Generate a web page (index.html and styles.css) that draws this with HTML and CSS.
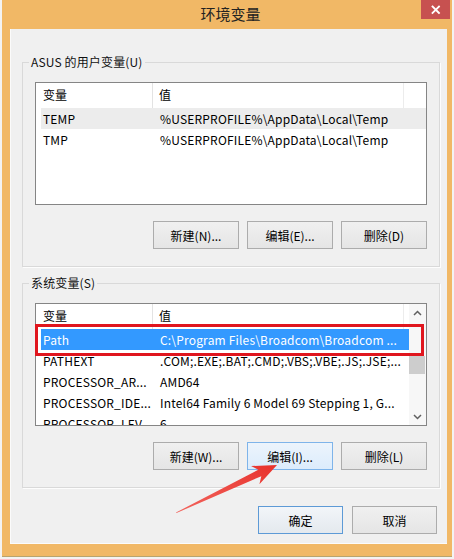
FILE: index.html
```html
<!DOCTYPE html>
<html lang="zh-CN">
<head>
<meta charset="utf-8">
<title>环境变量</title>
<link rel="stylesheet" href="styles.css">
</head>
<body>
<div class="window">
  <div class="titlebar">
    <span class="spacer"></span>
    <div class="title">环境变量</div>
    <div class="close">
      <svg width="29" height="19" viewBox="0 0 29 19"><path d="M11.5 6.5 L18 13 M18 6.5 L11.5 13" stroke="#fff" stroke-width="1.8" stroke-linecap="square"/></svg>
    </div>
  </div>
  <div class="content">
    <fieldset class="group">
      <legend>ASUS 的用户变量(U)</legend>
      <div class="list">
        <div class="rows">
          <div class="lhead"><div class="h1">变量</div><div class="h2">值</div></div>
          <div class="row hover"><div class="c1">TEMP</div><div class="c2">%USERPROFILE%\AppData\Local\Temp</div></div>
          <div class="row"><div class="c1">TMP</div><div class="c2">%USERPROFILE%\AppData\Local\Temp</div></div>
        </div>
      </div>
      <div class="btns">
        <button class="btn">新建(N)...</button>
        <button class="btn">编辑(E)...</button>
        <button class="btn">删除(D)</button>
      </div>
    </fieldset>
    <fieldset class="group group2">
      <legend>系统变量(S)</legend>
      <div class="list">
        <div class="rows">
          <div class="lhead"><div class="h1">变量</div><div class="h2">值</div></div>
          <div class="row selected"><div class="c1">Path</div><div class="c2">C:\Program Files\Broadcom\Broadcom ...</div></div>
          <div class="row"><div class="c1">PATHEXT</div><div class="c2">.COM;.EXE;.BAT;.CMD;.VBS;.VBE;.JS;.JSE;...</div></div>
          <div class="row"><div class="c1">PROCESSOR_AR...</div><div class="c2">AMD64</div></div>
          <div class="row"><div class="c1">PROCESSOR_IDE...</div><div class="c2">Intel64 Family 6 Model 69 Stepping 1, G...</div></div>
          <div class="row"><div class="c1">PROCESSOR_LEV...</div><div class="c2">6</div></div>
        </div>
        <div class="sbar">
          <div class="sarrow"><svg width="9" height="6" viewBox="0 0 9 6"><path d="M1 5 L4.5 1.5 L8 5" fill="none" stroke="#606060" stroke-width="1.5"/></svg></div>
          <div class="track"><div class="thumb"></div></div>
          <div class="sarrow"><svg width="9" height="6" viewBox="0 0 9 6"><path d="M1 1 L4.5 4.5 L8 1" fill="none" stroke="#606060" stroke-width="1.5"/></svg></div>
        </div>
        <div class="mark"></div>
      </div>
      <div class="btns">
        <button class="btn">新建(W)...</button>
        <button class="btn hot">编辑(I)...</button>
        <button class="btn">删除(L)</button>
      </div>
    </fieldset>
    <div class="dlgbtns">
      <button class="btn default">确定</button>
      <button class="btn">取消</button>
    </div>
  </div>
  <svg class="arrow" width="450" height="556" viewBox="2 0 450 556">
    <defs>
      <linearGradient id="ag" x1="0" y1="1" x2="1" y2="0">
        <stop offset="0" stop-color="#f2655e"/>
        <stop offset="1" stop-color="#e8322c"/>
      </linearGradient>
    </defs>
    <polygon points="176,512.5 258.3,469.8 251,466 277,465 259.4,484.2 261.3,476.2 176.5,513" fill="url(#ag)"/>
  </svg>
</div>
</body>
</html>
```
FILE: styles.css
```css
* { box-sizing: border-box; }
html, body { margin: 0; padding: 0; }
body {
  background: #f3f3f3;
  font-family: "Noto Sans CJK SC", "Noto Sans", sans-serif;
  font-size: 12px;
  color: #000;
}
.window {
  position: relative;
  margin-left: 2px;
  width: 450px;
  height: 557px;
  background: #f1b866;
  padding: 0 5px 12px 8px;
  border-bottom: 1px solid #b8a46e;
  display: flex;
  flex-direction: column;
}
.titlebar {
  height: 29px;
  display: grid;
  grid-template-columns: 1fr auto 1fr;
  margin-right: -3px;
}
.title {
  font-size: 15px;
  line-height: 27px;
  color: #222;
  padding-left: 1px;
}
.close {
  justify-self: end;
  align-self: start;
  width: 29px;
  height: 19px;
  background: #c75150;
}
.close svg { display: block; }
.content {
  flex: 1;
  background: #f0f0f0;
  box-shadow: inset 1px 0 #fbfbfb, inset 0 -1px #fbfbfb;
  padding: 25px 7px 0 12px;
  display: flex;
  flex-direction: column;
}
.group {
  margin: 0;
  padding: 0 12px 17px;
  border: 1px solid #d9d9d9;
  box-shadow: 1px 1px 0 #fdfdfd;
  min-width: 0;
}
.group2 { margin-top: 8px; }
legend {
  margin-left: -6px;
  padding: 0 2px;
  line-height: 16px;
  color: #111;
  letter-spacing: 0.15px;
}
.list {
  position: relative;
  margin-top: 12px;
  height: 123px;
  border: 1px solid #858585;
  background: #fff;
  display: flex;
  overflow: visible;
}
.rows {
  flex: 1;
  overflow: hidden;
  min-width: 0;
}
.lhead {
  height: 25px;
  display: flex;
  line-height: 24px;
}
.h1 {
  width: 117px;
  padding-left: 7px;
  border-right: 1px solid #e3e3e3;
}
.h2 {
  width: 251px;
  padding-left: 6px;
  border-right: 1px solid #ececec;
}
.row {
  display: flex;
  height: 21px;
  line-height: 21px;
  margin-left: 5px;
  white-space: nowrap;
  letter-spacing: 0.18px;
}
.row.hover { background: #ececec; }
.row.selected { background: #3399ff; color: #fff; }
.c1 { width: 117px; padding-left: 2px; overflow: hidden; }
.c2 { flex: 1; padding-left: 2px; overflow: hidden; }
.sbar {
  width: 17px;
  display: flex;
  flex-direction: column;
  background: #f7f7f7;
}
.sarrow {
  height: 17px;
  display: flex;
  align-items: center;
  justify-content: center;
}
.sarrow svg { display: block; }
.track { flex: 1; padding-top: 35px; }
.thumb {
  margin: 0 1px 0 0;
  height: 18px;
  background: #cdcdcd;
}
.mark {
  position: absolute;
  left: -1px;
  top: 20px;
  width: 389px;
  height: 32px;
  border: 3px solid #e0161e;
}
.btns {
  margin-top: 16px;
  display: flex;
  justify-content: flex-end;
  gap: 8px;
}
.btn {
  width: 86px;
  height: 28px;
  margin: 0;
  padding: 0;
  font-family: "Noto Sans CJK SC", "Noto Sans", sans-serif;
  font-size: 12px;
  color: #000;
  border: 1px solid #acacac;
  background: linear-gradient(#f0f0f0, #e5e5e5);
  border-radius: 0;
}
.btn.hot {
  border-color: #7eb4ea;
  background: linear-gradient(#ecf4fc, #dcecfc);
}
.btn.default {
  border-color: #5d9ad6;
  background: linear-gradient(#f2f5f9, #e4e9ee);
}
.dlgbtns {
  margin-top: 18px;
  margin-right: 3px;
  display: flex;
  justify-content: flex-end;
  gap: 9px;
}
.dlgbtns .btn { width: 85px; }
.arrow {
  position: absolute;
  left: 0;
  top: 0;
  pointer-events: none;
}
```
